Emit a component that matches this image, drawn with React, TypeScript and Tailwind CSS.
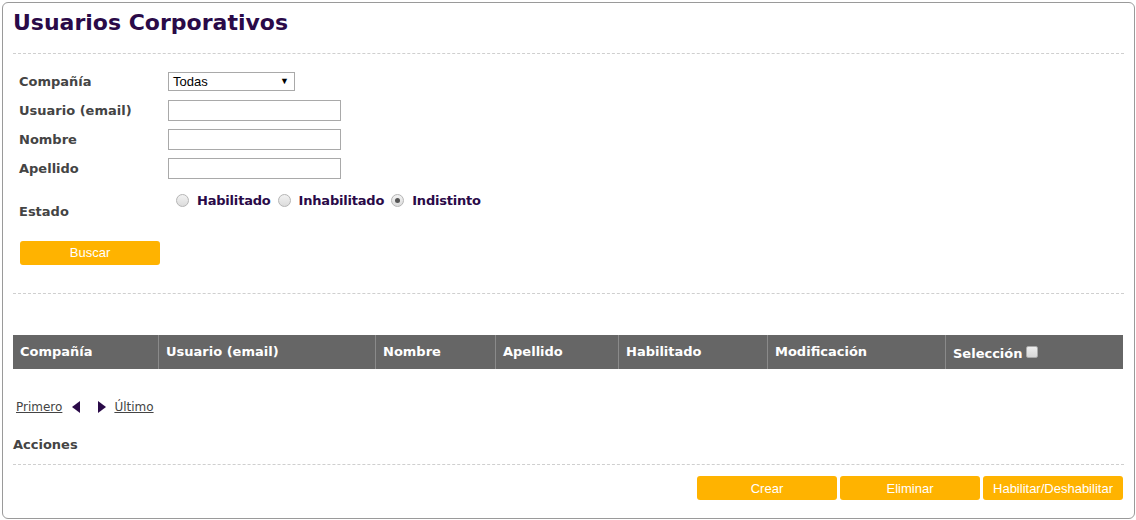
import React from "react";

const verdana = "font-['DejaVu_Sans',Verdana,sans-serif]";
const arial = "font-['Liberation_Sans',Arial,sans-serif]";

const columns: Array<{ label: string; width: string }> = [
  { label: "Compañía", width: "w-[146px]" },
  { label: "Usuario (email)", width: "w-[217px]" },
  { label: "Nombre", width: "w-[120px]" },
  { label: "Apellido", width: "w-[123px]" },
  { label: "Habilitado", width: "w-[149px]" },
  { label: "Modificación", width: "w-[178px]" },
];

function FormRow({ label, children }: { label: string; children: React.ReactNode }) {
  return (
    <div className="flex h-[29px] items-center">
      <div className="w-[155px] pl-[6px] text-[13px] font-bold text-[#444]">{label}</div>
      {children}
    </div>
  );
}

function TextInput() {
  return <input type="text" className="h-[21px] w-[173px] border border-[#a9a9a9] bg-white px-1 text-[13px]" />;
}

function Radio({ label, checked }: { label: string; checked?: boolean }) {
  return (
    <label className="flex items-center">
      <span className="flex h-[13px] w-[13px] items-center justify-center rounded-full border border-[#b5b5b5] bg-gradient-to-b from-[#f2f2f2] to-[#dcdcdc]">
        {checked && <span className="h-[5px] w-[5px] rounded-full bg-[#555]" />}
      </span>
      <span className="ml-[8px] mr-[7px] text-[13px] font-bold tracking-[-0.2px] text-[#2a0a48]">{label}</span>
    </label>
  );
}

function YellowButton({ label, className }: { label: string; className?: string }) {
  return (
    <button
      type="button"
      className={`h-[24px] w-[140px] rounded-[3px] bg-[#ffb300] text-[13px] text-white ${arial} ${className ?? ""}`}
    >
      {label}
    </button>
  );
}

export default function App() {
  return (
    <div className={`h-[520px] w-[1136px] bg-white p-[2px] ${verdana}`}>
      <div className="h-[517px] w-[1133px] rounded-[6px] border border-[#9a9a9a] pl-[10px] pr-[10px]">
        <h1 className="pt-[6px] text-[22px] font-bold leading-[28px] text-[#2a0a48]">Usuarios Corporativos</h1>
        <div className="mt-[16px] border-t border-dashed border-[#cfcfcf]" />

        <div className="mt-[13px]">
          <FormRow label="Compañía">
            <div className={`flex h-[19px] w-[127px] items-center justify-between border border-[#a9a9a9] bg-white pl-[4px] pr-[5px] text-[13px] text-black ${arial}`}>
              <span>Todas</span>
              <span className="text-[9px]">▼</span>
            </div>
          </FormRow>
          <FormRow label="Usuario (email)">
            <TextInput />
          </FormRow>
          <FormRow label="Nombre">
            <TextInput />
          </FormRow>
          <FormRow label="Apellido">
            <TextInput />
          </FormRow>
          <div className="flex h-[42px]">
            <div className="w-[155px] pl-[6px] pt-[19px] text-[13px] font-bold text-[#444]">Estado</div>
            <div className="flex items-start pl-[8px] pt-[8px]">
              <Radio label="Habilitado" />
              <Radio label="Inhabilitado" />
              <Radio label="Indistinto" checked />
            </div>
          </div>
          <div className="mt-[15px] pl-[7px]">
            <YellowButton label="Buscar" />
          </div>
        </div>

        <div className="mt-[28px] border-t border-dashed border-[#cfcfcf]" />

        <div className="mt-[41px] flex h-[34px] w-[1110px] bg-[#666] text-[13px] font-bold text-white">
          {columns.map((c) => (
            <div key={c.label} className={`${c.width} flex items-center border-r border-[#8a8a8a] pl-[7px]`}>
              {c.label}
            </div>
          ))}
          <div className="flex flex-1 items-center pl-[7px] pt-[3px]">
            Selección
            <span className="ml-[3px] mb-[3px] inline-block h-[12px] w-[12px] rounded-[2px] border border-[#aaa] bg-gradient-to-b from-[#eee] to-[#d8d8d8]" />
          </div>
        </div>

        <div className="mt-[29px] flex items-center pl-[3px] text-[12px]">
          <a href="#" className="text-[#444] underline">Primero</a>
          <svg width="8" height="12" viewBox="0 0 8 12" className="ml-[10px]">
            <polygon points="8,0 8,12 0,6" fill="#2a0a48" />
          </svg>
          <svg width="8" height="12" viewBox="0 0 8 12" className="ml-[18px]">
            <polygon points="0,0 0,12 8,6" fill="#2a0a48" />
          </svg>
          <a href="#" className="ml-[8px] text-[#444] underline">Último</a>
        </div>

        <div className="mt-[19px] text-[13px] font-bold text-[#444]">Acciones</div>
        <div className="mt-[10px] border-t border-dashed border-[#cfcfcf]" />

        <div className="mt-[11px] flex justify-end gap-[3px] pr-[1px]">
          <YellowButton label="Crear" />
          <YellowButton label="Eliminar" />
          <YellowButton label="Habilitar/Deshabilitar" />
        </div>
      </div>
    </div>
  );
}
